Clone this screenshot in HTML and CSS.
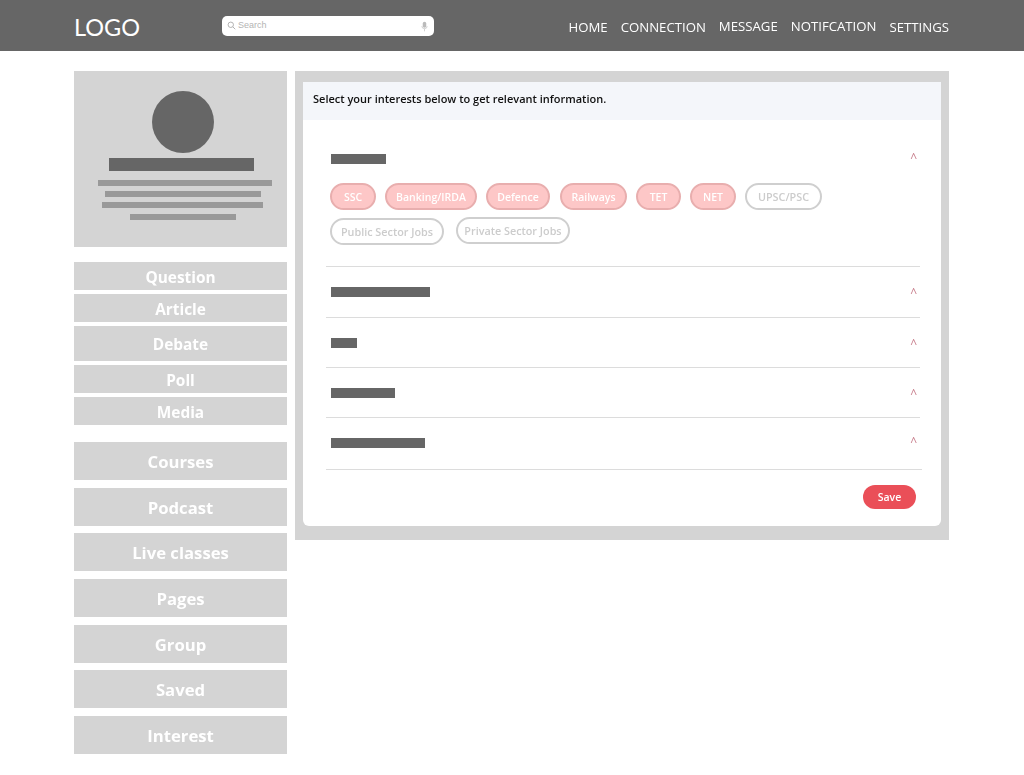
FILE: index.html
```html
<!DOCTYPE html>
<html lang="en">
<head>
<meta charset="utf-8">
<title>Interests</title>
<link rel="stylesheet" href="styles.css">
</head>
<body>
<header class="topbar">
  <div class="logo">LOGO</div>
  <div class="search">
    <svg class="search-icon" viewBox="0 0 10 10" width="9" height="9"><circle cx="4.2" cy="4.2" r="3" fill="none" stroke="#aaa" stroke-width="1"/><path d="M6.5 6.5L9.2 9.2" stroke="#aaa" stroke-width="1"/></svg>
    <span class="search-text">Search</span>
    <svg class="mic-icon" viewBox="0 0 8 12" width="7" height="11"><rect x="2" y="0.5" width="4" height="7" rx="2" fill="#bbb"/><path d="M1 5.5a3 3 0 0 0 6 0M4 8.5V11.5" fill="none" stroke="#ccc" stroke-width="1"/></svg>
  </div>
  <nav class="nav">
    <span class="nav-item">HOME</span>
    <span class="nav-item">CONNECTION</span>
    <span class="nav-item nav-up">MESSAGE</span>
    <span class="nav-item nav-up">NOTIFCATION</span>
    <span class="nav-item">SETTINGS</span>
  </nav>
</header>
<div class="page">
  <aside class="sidebar">
    <section class="profile">
      <div class="avatar"></div>
      <div class="name-bar"></div>
      <div class="line line-1"></div>
      <div class="line line-2"></div>
      <div class="line line-3"></div>
      <div class="line line-4"></div>
    </section>
    <div class="menu menu-small">
      <a class="menu-item">Question</a>
      <a class="menu-item">Article</a>
      <a class="menu-item menu-tall">Debate</a>
      <a class="menu-item">Poll</a>
      <a class="menu-item">Media</a>
    </div>
    <div class="menu menu-large">
      <a class="menu-item">Courses</a>
      <a class="menu-item">Podcast</a>
      <a class="menu-item">Live classes</a>
      <a class="menu-item">Pages</a>
      <a class="menu-item">Group</a>
      <a class="menu-item">Saved</a>
      <a class="menu-item">Interest</a>
    </div>
  </aside>
  <main class="panel">
    <div class="card">
      <div class="card-head">Select your interests below to get relevant information.</div>
      <div class="card-body">
        <section class="acc acc-open">
          <div class="acc-row"><span class="bar bar-55"></span><span class="caret">^</span></div>
          <div class="chips">
            <span class="chip on w-46">SSC</span>
            <span class="chip on w-92">Banking/IRDA</span>
            <span class="chip on w-64">Defence</span>
            <span class="chip on w-67 chip-gap">Railways</span>
            <span class="chip on w-45">TET</span>
            <span class="chip on w-46">NET</span>
            <span class="chip w-77">UPSC/PSC</span>
          </div>
          <div class="chips chips-second">
            <span class="chip w-114">Public Sector Jobs</span>
            <span class="chip chip-up w-114">Private Sector Jobs</span>
          </div>
        </section>
        <section class="acc acc-second"><div class="acc-row"><span class="bar bar-99"></span><span class="caret">^</span></div></section>
        <section class="acc"><div class="acc-row"><span class="bar bar-26"></span><span class="caret">^</span></div></section>
        <section class="acc"><div class="acc-row"><span class="bar bar-64"></span><span class="caret">^</span></div></section>
        <section class="acc acc-last"><div class="acc-row"><span class="bar bar-94"></span><span class="caret">^</span></div></section>
        <div class="actions"><button class="save">Save</button></div>
      </div>
    </div>
  </main>
</div>
</body>
</html>
```
FILE: styles.css
```css
* { box-sizing: border-box; }
html, body { margin: 0; padding: 0; }
body {
  background: #fff;
  font-family: "Open Sans", "Liberation Sans", sans-serif;
  filter: blur(0.6px);
  min-height: 775px;
}

.topbar {
  height: 51px;
  background: #666;
  display: flex;
  align-items: center;
  padding: 0 75px 0 74px;
  color: #fff;
}
.logo {
  width: 148px;
  font-family: Lato, "Open Sans", sans-serif;
  font-size: 23.5px;
  line-height: 32px;
  margin-top: 3px;
}
.search {
  width: 212px;
  height: 20px;
  margin-top: 1px;
  background: #fff;
  border-radius: 5px;
  display: flex;
  align-items: center;
  padding: 0 6px 2px 5px;
}
.search-icon { flex: none; }
.search-text {
  flex: 1;
  margin-left: 2px;
  font-family: "Liberation Sans", sans-serif;
  font-size: 9px;
  color: #b4b4b4;
}
.mic-icon { flex: none; margin-top: 2px; }

.nav {
  margin-left: auto;
  display: flex;
  gap: 13px;
  align-items: center;
  font-size: 13.2px;
  line-height: 20px;
  margin-top: 3px;
}
.nav-up { margin-bottom: 3px; }

.page {
  display: flex;
  align-items: flex-start;
  gap: 8px;
  padding: 20px 75px 0 74px;
}
.sidebar { width: 213px; flex: none; }
.profile {
  height: 176px;
  background: #d4d4d4;
  padding-top: 20px;
  display: flex;
  flex-direction: column;
  align-items: center;
}
.avatar {
  width: 62px;
  height: 62px;
  border-radius: 50%;
  background: #666;
  margin-left: 5px;
}
.name-bar {
  width: 145px;
  height: 13px;
  background: #666;
  margin-top: 5px;
  margin-left: 2px;
}
.line { height: 6px; background: #999; }
.line-1 { width: 174px; margin-top: 9px; margin-left: 9px; }
.line-2 { width: 156px; margin-top: 5px; margin-left: 5px; }
.line-3 { width: 161px; margin-top: 5px; margin-left: 3px; }
.line-4 { width: 106px; margin-top: 6px; margin-left: 5px; }

.menu { display: flex; flex-direction: column; }
.menu-item {
  display: flex;
  align-items: center;
  justify-content: center;
  background: #d4d4d4;
  color: #fff;
  font-weight: 700;
}
.menu-small { margin-top: 15px; gap: 4px; }
.menu-small .menu-item { height: 28px; font-size: 15.4px; padding-top: 2px; }
.menu-small .menu-tall { height: 35px; padding-top: 1px; }
.menu-large { margin-top: 17px; gap: 7.7px; }
.menu-large .menu-item { height: 38px; font-size: 16.7px; padding-top: 1px; }

.panel {
  width: 654px;
  height: 469px;
  background: #d4d4d4;
  padding: 11px 8px 14px;
}
.card {
  height: 444px;
  background: #fff;
  border-radius: 0 0 6px 6px;
  display: flex;
  flex-direction: column;
}
.card-head {
  height: 38px;
  background: #f4f6fa;
  padding: 0 10px 5px;
  display: flex;
  align-items: center;
  font-size: 11px;
  font-weight: 600;
  color: #111;
}
.card-body { padding: 0 21px 0 23px; flex: 1; }
.acc {
  height: 50px;
  border-bottom: 1px solid #dcdcdc;
}
.acc-open { height: 147px; padding-top: 27px; }
.acc-second { height: 51px; }
.acc-last { height: 52px; width: 596px; }
.acc-row {
  height: 50px;
  display: flex;
  align-items: center;
  justify-content: space-between;
  padding: 0 3px 0 5px;
}
.acc-open .acc-row { height: 24px; }
.acc-last .acc-row { padding-right: 5px; }
.bar { display: block; height: 10px; background: #666; }
.bar-55 { width: 55px; }
.bar-99 { width: 99px; }
.bar-26 { width: 26px; }
.bar-64 { width: 64px; }
.bar-94 { width: 94px; }
.caret {
  font-size: 12px;
  line-height: 12px;
  margin-top: 1px;
  color: #c9808e;
}
.acc-open .caret, .acc-last .caret { margin-top: -3px; }
.chips { display: flex; gap: 9px; margin-top: 12px; padding-left: 4px; }
.chips-second { margin-top: 8px; gap: 12px; align-items: flex-start; }
.chip {
  height: 27px;
  border: 2px solid #cfcfcf;
  border-radius: 14px;
  background: #fff;
  color: #ccc;
  font-size: 10.8px;
  font-weight: 600;
  display: flex;
  align-items: center;
  justify-content: center;
  white-space: nowrap;
}
.chip.on {
  background: #fdc7c7;
  border-color: #e8aeae;
  color: #fff;
  font-size: 10.5px;
}
.chip-up { margin-top: -1px; }
.chip-gap { margin-left: 1px; }
.w-45 { width: 45px; }
.w-46 { width: 46px; }
.w-64 { width: 64px; }
.w-67 { width: 67px; }
.w-77 { width: 77px; }
.w-92 { width: 92px; }
.w-114 { width: 114px; }
.actions { display: flex; justify-content: flex-end; padding: 15px 4px 0 0; }
.save {
  width: 53px;
  height: 24px;
  border: none;
  border-radius: 12px;
  background: #ea4f58;
  color: #fff;
  font-family: inherit;
  font-size: 10.5px;
  font-weight: 600;
  padding: 0;
}
```
